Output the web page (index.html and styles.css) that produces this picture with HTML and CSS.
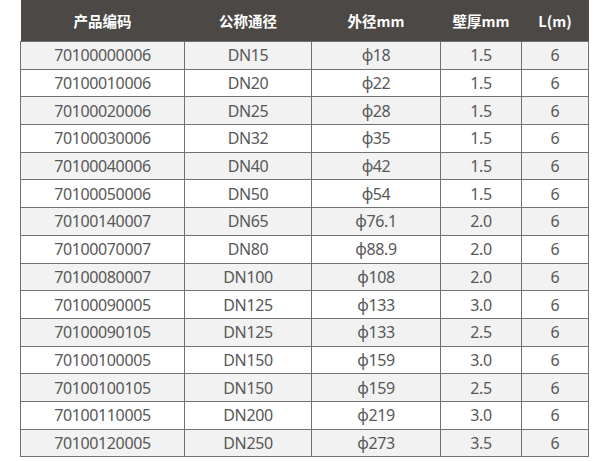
FILE: index.html
```html
<!DOCTYPE html>
<html lang="zh">
<head>
<meta charset="utf-8">
<title>规格表</title>
<link rel="stylesheet" href="styles.css">
</head>
<body>
<div class="wrap">
<table class="spec">
<colgroup>
<col class="c1"><col class="c2"><col class="c3"><col class="c4"><col class="c5">
</colgroup>
<thead>
<tr><th>产品编码</th><th>公称通径</th><th>外径mm</th><th>壁厚mm</th><th>L(m)</th></tr>
</thead>
<tbody>
<tr><td>70100000006</td><td>DN15</td><td>ϕ18</td><td>1.5</td><td>6</td></tr>
<tr><td>70100010006</td><td>DN20</td><td>ϕ22</td><td>1.5</td><td>6</td></tr>
<tr><td>70100020006</td><td>DN25</td><td>ϕ28</td><td>1.5</td><td>6</td></tr>
<tr><td>70100030006</td><td>DN32</td><td>ϕ35</td><td>1.5</td><td>6</td></tr>
<tr><td>70100040006</td><td>DN40</td><td>ϕ42</td><td>1.5</td><td>6</td></tr>
<tr><td>70100050006</td><td>DN50</td><td>ϕ54</td><td>1.5</td><td>6</td></tr>
<tr><td>70100140007</td><td>DN65</td><td>ϕ76.1</td><td>2.0</td><td>6</td></tr>
<tr><td>70100070007</td><td>DN80</td><td>ϕ88.9</td><td>2.0</td><td>6</td></tr>
<tr><td>70100080007</td><td>DN100</td><td>ϕ108</td><td>2.0</td><td>6</td></tr>
<tr><td>70100090005</td><td>DN125</td><td>ϕ133</td><td>3.0</td><td>6</td></tr>
<tr><td>70100090105</td><td>DN125</td><td>ϕ133</td><td>2.5</td><td>6</td></tr>
<tr><td>70100100005</td><td>DN150</td><td>ϕ159</td><td>3.0</td><td>6</td></tr>
<tr><td>70100100105</td><td>DN150</td><td>ϕ159</td><td>2.5</td><td>6</td></tr>
<tr><td>70100110005</td><td>DN200</td><td>ϕ219</td><td>3.0</td><td>6</td></tr>
<tr><td>70100120005</td><td>DN250</td><td>ϕ273</td><td>3.5</td><td>6</td></tr>
</tbody>
</table>
</div>
</body>
</html>
```
FILE: styles.css
```css
html, body {
  margin: 0;
  padding: 0;
  background: #ffffff;
}
.wrap {
  padding: 0 0 0 20px;
}
.spec {
  border-collapse: collapse;
  table-layout: fixed;
  width: 568px;
  font-family: "Noto Sans", "Noto Sans CJK SC", sans-serif;
  color: #585858;
}
.c1 { width: 164px; }
.c2 { width: 127px; }
.c3 { width: 129px; }
.c4 { width: 81px; }
.c5 { width: 67px; }
.spec th {
  background: #4b4846;
  color: #ffffff;
  font-family: "Noto Sans CJK SC", "Noto Sans", sans-serif;
  font-weight: 700;
  font-size: 14.5px;
  height: 41px;
  padding: 0;
  text-align: center;
  vertical-align: middle;
  border: none;
  border-bottom: 1px solid #707070;
}
.spec td {
  height: 26.7px;
  padding: 0;
  font-size: 16px;
  letter-spacing: -0.4px;
  line-height: 18px;
  text-align: center;
  vertical-align: middle;
  border: 1px solid #727272;
}
.spec tbody tr:nth-child(odd) td {
  background: #f2f2f2;
}
.spec tbody tr:nth-child(even) td {
  background: #ffffff;
}
```
